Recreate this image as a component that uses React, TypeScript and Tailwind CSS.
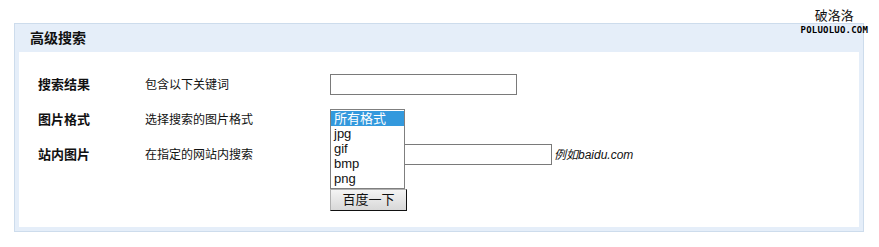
const cjk = "font-['Liberation_Sans','Noto_Sans_CJK_SC',sans-serif]";

const rows = [
  { label: "搜索结果", hint: "包含以下关键词" },
  { label: "图片格式", hint: "选择搜索的图片格式" },
  { label: "站内图片", hint: "在指定的网站内搜索" },
];

const formats = ["所有格式", "jpg", "gif", "bmp", "png"];

function FormatList() {
  return (
    <div className="absolute left-0 top-0 z-10 flex flex-col">
      <div className="w-[75px] h-[80px] border border-[#7f7f7f] bg-white py-[1px]">
        {formats.map((f, i) => (
          <div
            key={f}
            className={
              "h-[15px] pl-[3px] text-[13px] leading-[15px] " +
              (i === 0 ? "bg-[#3399dd] text-white" : "text-[#111]")
            }
          >
            {f}
          </div>
        ))}
      </div>
      <button className="w-[77px] h-[22px] border border-t-[#b0b0b0] border-l-[#b0b0b0] border-r-[#111] border-b-[#111] bg-gradient-to-b from-[#f4f4f4] to-[#d8d8d8] text-[13px] leading-[18px] text-[#111]">
        百度一下
      </button>
    </div>
  );
}

export default function App() {
  return (
    <div className={"relative w-[879px] h-[247px] bg-white overflow-hidden " + cjk}>
      <div className="absolute right-[11px] top-[8px] z-20 flex flex-col items-center">
        <span className="text-[13px] leading-[15px] text-[#111]">破洛洛</span>
        <span className="mt-[3px] font-['DejaVu_Sans_Mono',monospace] font-bold text-[9px] leading-[9px] tracking-[0.2px] text-black">
          POLUOLUO.COM
        </span>
      </div>

      <div className="ml-[14px] mt-[23px] w-[850px] border border-[#cddcec] bg-[#e5eef9] px-[4px] pb-[4px]">
        <div className="h-[28px] pl-[11px] flex items-center text-[14px] font-bold text-[#111]">
          高级搜索
        </div>
        <div className="h-[175px] bg-white pl-[19px] pt-[15px]">
          {rows.map((r, i) => (
            <div key={r.label} className="h-[35px] flex items-center">
              <div className="w-[107px] text-[13px] font-bold text-[#111]">{r.label}</div>
              <div className="w-[185px] text-[12px] text-[#111]">{r.hint}</div>
              {i === 0 && (
                <input
                  type="text"
                  className="w-[187px] h-[21px] border border-[#7a7a7a] bg-white outline-none"
                />
              )}
              {i === 1 && (
                <div className="relative w-[75px] h-[21px]">
                  <FormatList />
                </div>
              )}
              {i === 2 && (
                <div className="flex items-center">
                  <input
                    type="text"
                    className="w-[222px] h-[21px] border border-[#7a7a7a] bg-white outline-none"
                  />
                  <span className="ml-[2px] text-[12px] italic text-[#111]">例如baidu.com</span>
                </div>
              )}
            </div>
          ))}
        </div>
      </div>
    </div>
  );
}
